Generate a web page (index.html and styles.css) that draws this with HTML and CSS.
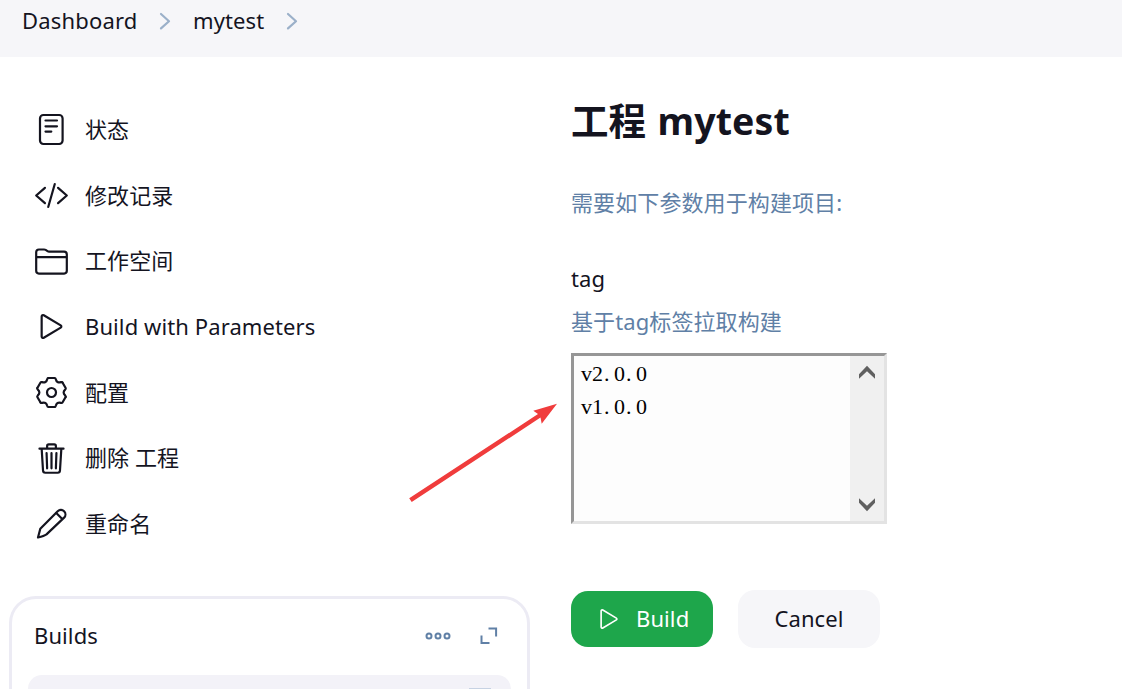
FILE: index.html
```html
<!DOCTYPE html>
<html lang="zh-CN">
<head>
<meta charset="utf-8">
<title>mytest</title>
<link rel="stylesheet" href="styles.css">
</head>
<body>
<header class="breadcrumbs">
  <span class="crumb crumb-home">Dashboard</span>
  <svg class="chevron" width="12" height="18" viewBox="0 0 12 18"><path d="M2 2l8 7.200-8 7.200"/></svg>
  <span class="crumb crumb-job">mytest</span>
  <svg class="chevron" width="12" height="18" viewBox="0 0 12 18"><path d="M2 2l8 7.200-8 7.200"/></svg>
</header>
<div class="page">
  <aside class="sidebar">
    <nav class="tasks">
      <a class="task"><svg class="icon" viewBox="0 0 35 35"><rect x="6" y="3" width="22.600" height="29" rx="3.400"/><path d="M11.500 8.500h11.500M11.500 14.300h11.500M11.500 19.600h5.800"/></svg><span>状态</span></a>
      <a class="task"><svg class="icon ion" viewBox="0 0 512 512"><path d="M160 368L32 256l128-112M352 368l128-112-128-112M304 88l-96 336"/></svg><span>修改记录</span></a>
      <a class="task"><svg class="icon ion" viewBox="0 0 512 512"><path d="M440 432H72a40 40 0 01-40-40V120a40 40 0 0140-40h75.890a40 40 0 0122.190 6.720l27.840 18.560a40 40 0 0022.190 6.720H440a40 40 0 0140 40v240a40 40 0 01-40 40zM32 192h448"/></svg><span>工作空间</span></a>
      <a class="task"><svg class="icon ion" viewBox="0 0 512 512"><path d="M112 111v290c0 17.440 17 28.520 31 20.160l247.900-148.370c12.120-7.250 12.120-26.330 0-33.580L143 90.840c-14-8.360-31 2.720-31 20.160z"/></svg><span>Build with Parameters</span></a>
      <a class="task"><svg class="icon" viewBox="-17.500 -17.500 35 35"><defs><path id="tooth" d="M-3.200-14.500H3.200Q4-14.500 4.300-13.300C4.900-10.600 6.730-9.540 9.370-10.370Q10.560-10.710 10.960-10.020"/></defs><use href="#tooth"/><use href="#tooth" transform="rotate(60)"/><use href="#tooth" transform="rotate(120)"/><use href="#tooth" transform="rotate(180)"/><use href="#tooth" transform="rotate(240)"/><use href="#tooth" transform="rotate(300)"/><circle r="4.500"/></svg><span>配置</span></a>
      <a class="task"><svg class="icon ion" viewBox="0 0 512 512"><path d="M112 112l20 320c.95 18.490 14.400 32 32 32h184c18 0 30.870-13.510 32-32l20-320M80 112h352M192 112V72a24 24 0 0124-24h80a24 24 0 0124 24v40M256 176v224M184 176l8 224M328 176l-8 224"/></svg><span>删除 工程</span></a>
      <a class="task"><svg class="icon" viewBox="0 0 35 35"><path d="M4 31.500l2.300-8.700L23.700 5.200a4.500 4.500 0 016.400 6.400L12.500 28.400Q10.300 30 4 31.500zM22 6.800l6.500 6.400"/></svg><span>重命名</span></a>
    </nav>
    <section class="builds">
      <div class="builds-head">
        <span class="builds-title">Builds</span>
        <svg class="dots" width="26" height="10" viewBox="0 0 26 10"><circle cx="4" cy="5" r="2.500"/><circle cx="13" cy="5" r="2.500"/><circle cx="22" cy="5" r="2.500"/></svg>
        <svg class="expand" width="18" height="18" viewBox="0 0 18 18"><path d="M8.500 1.500h7.600v8M1.500 8.500v7.600h8"/></svg>
      </div>
      <div class="filter"><span class="filter-key"></span></div>
    </section>
  </aside>
  <main class="content">
    <h1 class="title">工程 <span class="title-name">mytest</span></h1>
    <p class="intro">需要如下参数用于构建项目:</p>
    <div class="label">tag</div>
    <div class="hint">基于tag标签拉取构建</div>
    <div class="listbox">
      <div class="options">
        <div class="option">v2<i class="dot">.</i>0<i class="dot">.</i>0</div>
        <div class="option">v1<i class="dot">.</i>0<i class="dot">.</i>0</div>
      </div>
      <div class="scrollbar">
        <svg width="16" height="14" viewBox="0 0 16 14"><path d="M0 9.200L8 .8l8 8.400v4.600L8 6.200l-8 7.600z"/></svg>
        <svg width="16" height="14" viewBox="0 0 16 14"><path d="M0 .2L8 7.800l8-7.600v4.600L8 13.200 0 4.800z"/></svg>
      </div>
    </div>
    <div class="actions">
      <button class="btn btn-build"><svg width="28" height="28" viewBox="0 0 512 512"><path d="M112 111v290c0 17.440 17 28.520 31 20.160l247.900-148.370c12.120-7.250 12.120-26.330 0-33.580L143 90.840c-14-8.360-31 2.720-31 20.160z"/></svg><span>Build</span></button>
      <button class="btn btn-cancel"><span>Cancel</span></button>
    </div>
  </main>
</div>
<svg class="arrow" width="152" height="104" viewBox="0 0 152 104"><path d="M1.200 97.300L130 13l-4.700-3.300 23.700-7-15.300 20-1.200-6.100L3.700 101z"/></svg>
</body>
</html>
```
FILE: styles.css
```css
* { box-sizing: border-box; }
body {
  margin: 0;
  height: 689px;
  overflow: hidden;
  background: #fff;
  color: #14141f;
  font: 22px/32px "Noto Sans", "Noto Sans CJK SC", sans-serif;
  letter-spacing: 0.1px;
  position: relative;
}
svg { fill: none; flex: none; display: block; }
.breadcrumbs {
  height: 57px;
  padding: 0 22px 15px;
  display: flex;
  align-items: center;
  background: #f6f6f9;
}
.chevron { stroke: #9bb0c9; stroke-width: 2.2; stroke-linecap: round; stroke-linejoin: round; }
.crumb { white-space: nowrap; padding-bottom: 2px; }
.crumb-home { width: 137px; letter-spacing: 0.18px; }
.crumb-job { width: 93px; margin-left: 22px; }
.page { display: flex; height: 632px; }
.sidebar { width: 530px; padding: 40px 0 0 9px; flex: none; }
.tasks { height: 499px; padding-left: 25px; }
.task { height: 65.7px; display: flex; align-items: center; gap: 16px; white-space: nowrap; }
.task span { padding-bottom: 2px; }
.icon { width: 35px; height: 35px; stroke: #14141f; stroke-width: 2.2; stroke-linecap: round; stroke-linejoin: round; }
.ion { stroke-width: 32; }
.builds {
  width: 521px;
  height: 93px;
  overflow: hidden;
  border: 3px solid #ecebf4;
  border-bottom: 0;
  border-radius: 27px 27px 0 0;
  padding: 18px 16px 0;
}
.builds-head { display: flex; align-items: center; height: 38px; padding: 0 13px 0 6px; }
.builds-title { flex: 1; padding-bottom: 3px; }
.dots { stroke: #6080a6; stroke-width: 2; margin-right: 29px; }
.expand { stroke: #6080a6; stroke-width: 2; }
.filter {
  height: 14px;
  overflow: hidden;
  margin-top: 20px;
  border-radius: 16px 16px 0 0;
  background: #f3f2f8;
  padding: 13px 20px 0;
  display: flex;
  justify-content: flex-end;
}
.filter-key { width: 22px; height: 1px; background: #c7d2e3; }
.content { padding: 34px 0 0 41px; }
.title { margin: 0; font-size: 37.5px; line-height: 60px; font-weight: 700; white-space: nowrap; }
.title-name { margin-left: 1.5px; }
.intro { margin: 35px 0 0; color: #6080a6; }
.label { margin-top: 44px; }
.hint { margin-top: 11px; color: #6080a6; }
.listbox {
  width: 316px;
  height: 171px;
  margin-top: 16px;
  border: 3px solid;
  border-color: #969696 #e3e3e3 #e3e3e3 #969696;
  background: #fdfdfd;
  display: flex;
}
.options { flex: 1; padding: 1px 0 0 7px; font: 22px/33px "Liberation Serif", serif; letter-spacing: 0; color: #000; }
.option { height: 33px; }
.dot { font-style: normal; display: inline-block; width: 11px; padding-left: 1px; }
.scrollbar {
  width: 34px;
  background: #f0f0f0;
  display: flex;
  flex-direction: column;
  justify-content: space-between;
  align-items: center;
  padding: 9px 0;
}
.scrollbar svg { fill: #606060; }
.actions { margin-top: 66px; display: flex; align-items: center; gap: 25px; }
.btn {
  width: 142px;
  height: 56px;
  border: 0;
  border-radius: 17px;
  padding: 0;
  font: inherit;
  letter-spacing: inherit;
  display: flex;
  align-items: center;
  justify-content: center;
}
.btn span { padding-bottom: 2px; }
.btn-build { background: #1ea64b; color: #fff; gap: 13px; justify-content: flex-start; padding-left: 24px; }
.btn-build svg { stroke: #fff; stroke-width: 30; stroke-linejoin: round; }
.btn-cancel { height: 58px; background: #f6f6f9; color: #14141f; }
.arrow { position: absolute; left: 408px; top: 401px; fill: #f03c3c; }
```
